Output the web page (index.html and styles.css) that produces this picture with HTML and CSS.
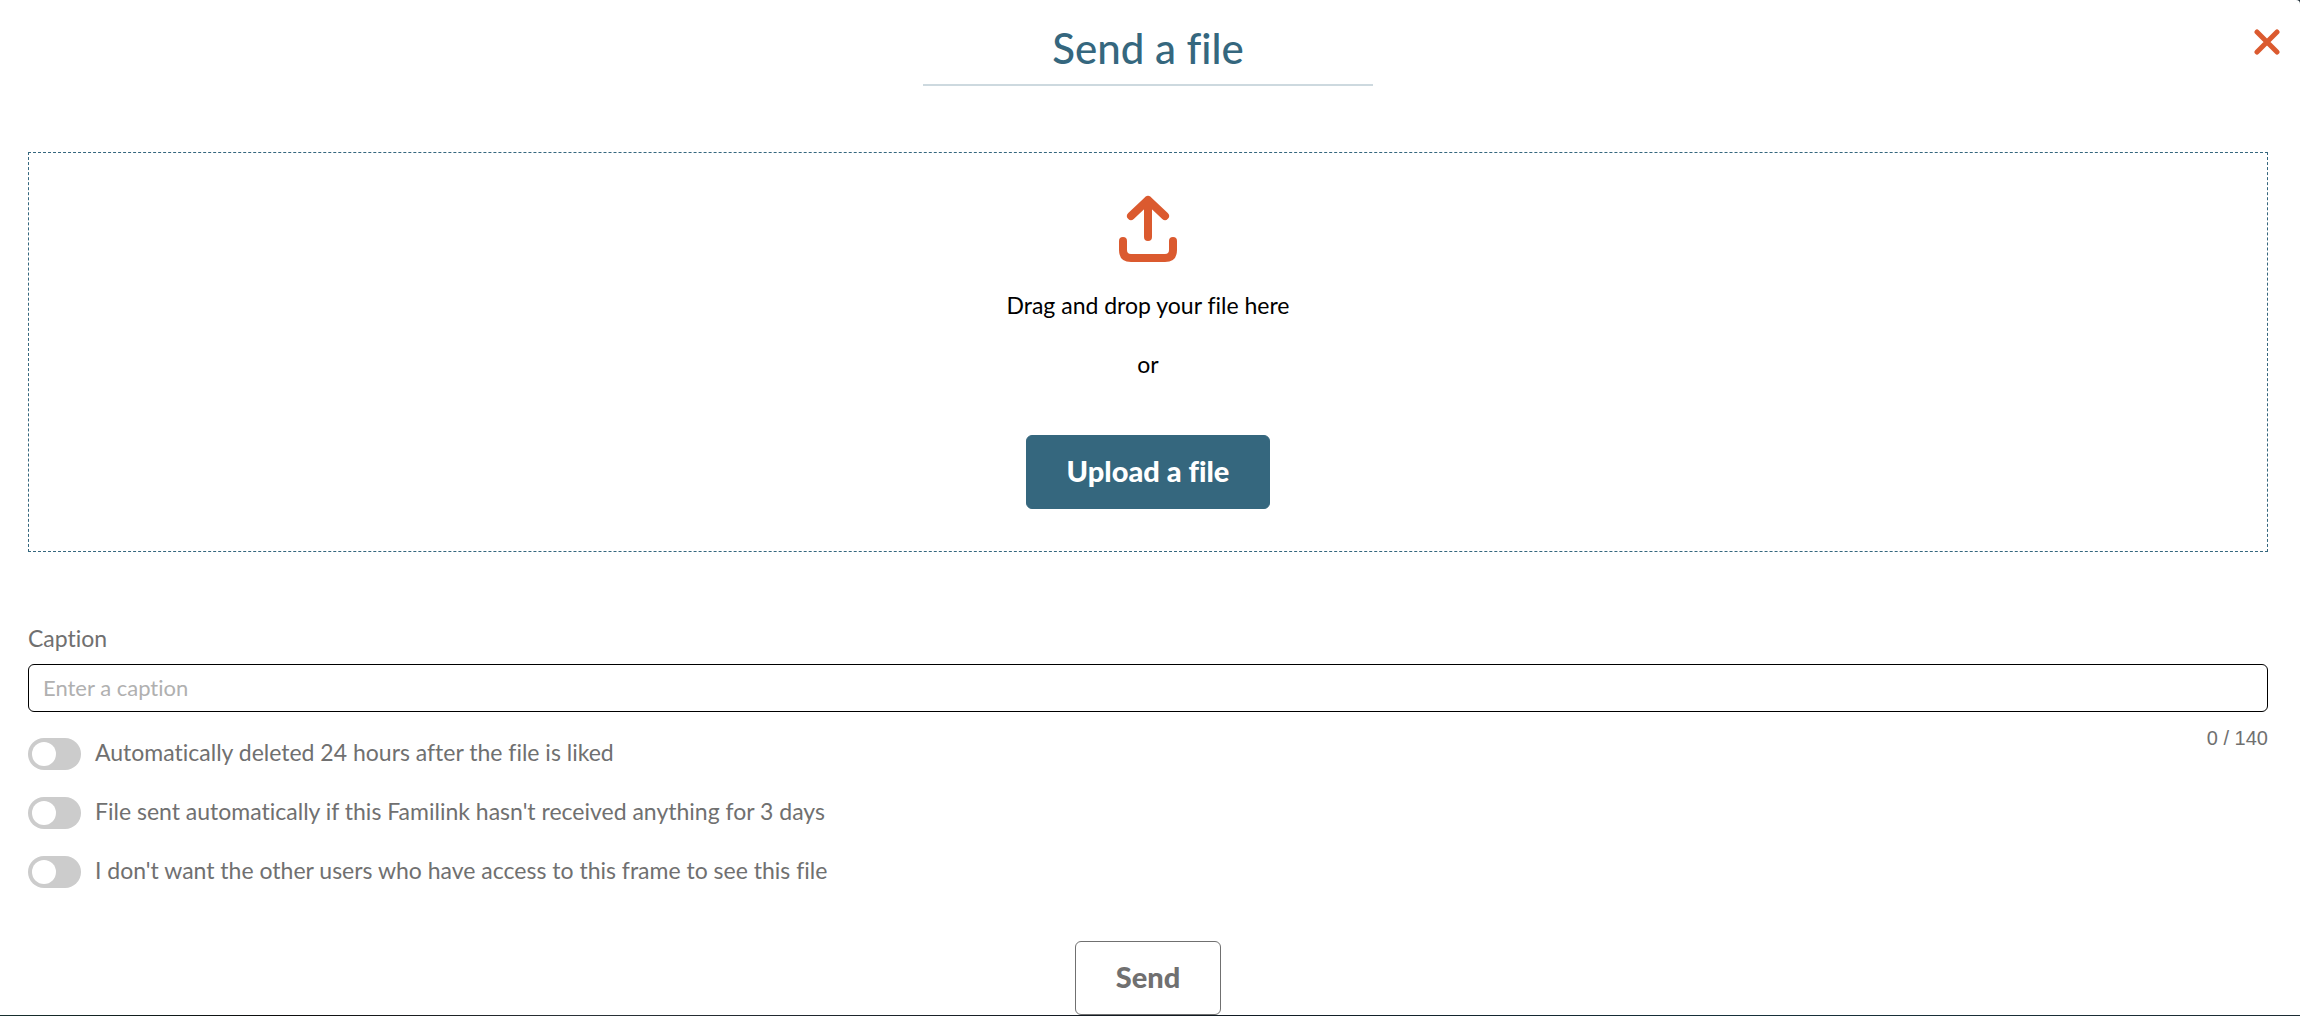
FILE: index.html
```html
<!DOCTYPE html>
<html lang="en">
<head>
    <meta charset="UTF-8">
    <meta name="viewport" content="width=device-width, initial-scale=1.0">
    <title>Send a file</title>
    <link rel="stylesheet" href="styles.css">
</head>
<body>

    <form class="modal">
        <button type="button" class="close-button" aria-label="Close">
            <svg width="26" height="26" viewBox="0 0 26 26" fill="none" stroke="currentColor" stroke-width="5" stroke-linecap="round">
                <path d="M3 3L23 23M23 3L3 23"/>
            </svg>
        </button>

        <h1>Send a file</h1>

        <div class="drop-zone">
            <svg class="upload-icon" width="58" height="68" viewBox="0 0 58 68" fill="none" stroke="currentColor" stroke-width="8" stroke-linecap="round" stroke-linejoin="round">
                <path d="M29 42V5M12 21L29 5L46 21"/>
                <path d="M4 46V55Q4 63 12 63H46Q54 63 54 55V46"/>
            </svg>
            <p>Drag and drop your file here</p>
            <p>or</p>
            <button type="button" class="upload-button">Upload a file</button>
        </div>

        <label class="caption-label" for="caption">Caption</label>
        <input type="text" id="caption" class="caption-input" placeholder="Enter a caption" maxlength="140">

        <div class="options-row">
            <div class="options">
                <label class="option">
                    <input type="checkbox" class="toggle">
                    <span>Automatically deleted 24 hours after the file is liked</span>
                </label>
                <label class="option">
                    <input type="checkbox" class="toggle">
                    <span>File sent automatically if this Familink hasn't received anything for 3 days</span>
                </label>
                <label class="option">
                    <input type="checkbox" class="toggle">
                    <span>I don't want the other users who have access to this frame to see this file</span>
                </label>
            </div>
            <span class="counter">0 / 140</span>
        </div>

        <button type="submit" class="send-button">Send</button>
    </form>

</body>
</html>
```

FILE: styles.css
```css
* {
    box-sizing: border-box;
    margin: 0;
    padding: 0;
    font-family: Lato, 'Open Sans', sans-serif;
    font-variant-ligatures: none;
}
body {
    background: linear-gradient(90deg, #17302f, #0c0c0c 12%, #2a3238 25%, #101820 50%, #16303a 75%, #1c2c34);
    min-height: 100vh;
    padding-bottom: 1px;
}
.modal {
    position: relative;
    display: flex;
    flex-direction: column;
    background-color: #fff;
    padding: 20px 32px 0 28px;
    border-top-right-radius: 4px;
}
.close-button {
    position: absolute;
    top: 21px;
    right: 12px;
    width: 42px;
    height: 42px;
    display: flex;
    align-items: center;
    justify-content: center;
    background: none;
    border: none;
    color: #db5a2f;
    cursor: pointer;
}
h1 {
    align-self: center;
    width: 450px;
    padding-bottom: 8px;
    border-bottom: 2px solid #cdd9df;
    color: #35677e;
    font-size: 42px;
    font-weight: 500;
    line-height: 56px;
    text-align: center;
}
.drop-zone {
    display: flex;
    flex-direction: column;
    align-items: center;
    margin-top: 66px;
    padding: 42px 20px;
    border: 1px dashed #35677e;
}
.upload-icon {
    margin-bottom: 27px;
    color: #db5a2f;
}
.drop-zone p {
    margin-bottom: 29px;
    color: #000;
    font-size: 23px;
    line-height: 30px;
}
.upload-button,
.send-button {
    height: 74px;
    padding: 0 40px 4px;
    border-radius: 6px;
    font-size: 29px;
    font-weight: 900;
    cursor: pointer;
}
.upload-button {
    margin-top: 27px;
    background-color: #35677e;
    border: 1px solid #35677e;
    color: #fff;
}
.caption-label {
    align-self: flex-start;
    margin-top: 71px;
    color: #707070;
    font-size: 23px;
    line-height: 30px;
}
.caption-input {
    width: 100%;
    height: 48px;
    margin-top: 11px;
    padding: 0 14px 2px;
    border: 1px solid #000;
    border-radius: 6px;
    color: #000;
    font-size: 22px;
}
.caption-input::placeholder {
    color: #b0b0b0;
}
.options-row {
    display: flex;
    justify-content: space-between;
    align-items: flex-start;
    margin-top: 14px;
}
.options {
    display: flex;
    flex-direction: column;
    gap: 19px;
    margin-top: 8px;
}
.option {
    display: flex;
    align-items: center;
    gap: 14px;
    min-height: 40px;
    color: #707070;
    font-size: 23px;
    line-height: 30px;
}
.option span {
    padding-bottom: 4px;
}
.toggle {
    appearance: none;
    flex-shrink: 0;
    width: 53px;
    height: 32px;
    padding: 4px;
    border-radius: 16px;
    background-color: #ccc;
    cursor: pointer;
}
.toggle::before {
    content: "";
    display: block;
    width: 24px;
    height: 24px;
    border-radius: 50%;
    background-color: #fff;
}
.toggle:checked {
    background-color: #35677e;
}
.toggle:checked::before {
    margin-left: auto;
}
.counter {
    color: #707070;
    font-family: 'Liberation Sans', Arial, sans-serif;
    font-size: 20px;
    line-height: 24px;
}
.send-button {
    align-self: center;
    margin-top: 49px;
    background-color: #fff;
    border: 1px solid #707070;
    color: #707070;
}
```
